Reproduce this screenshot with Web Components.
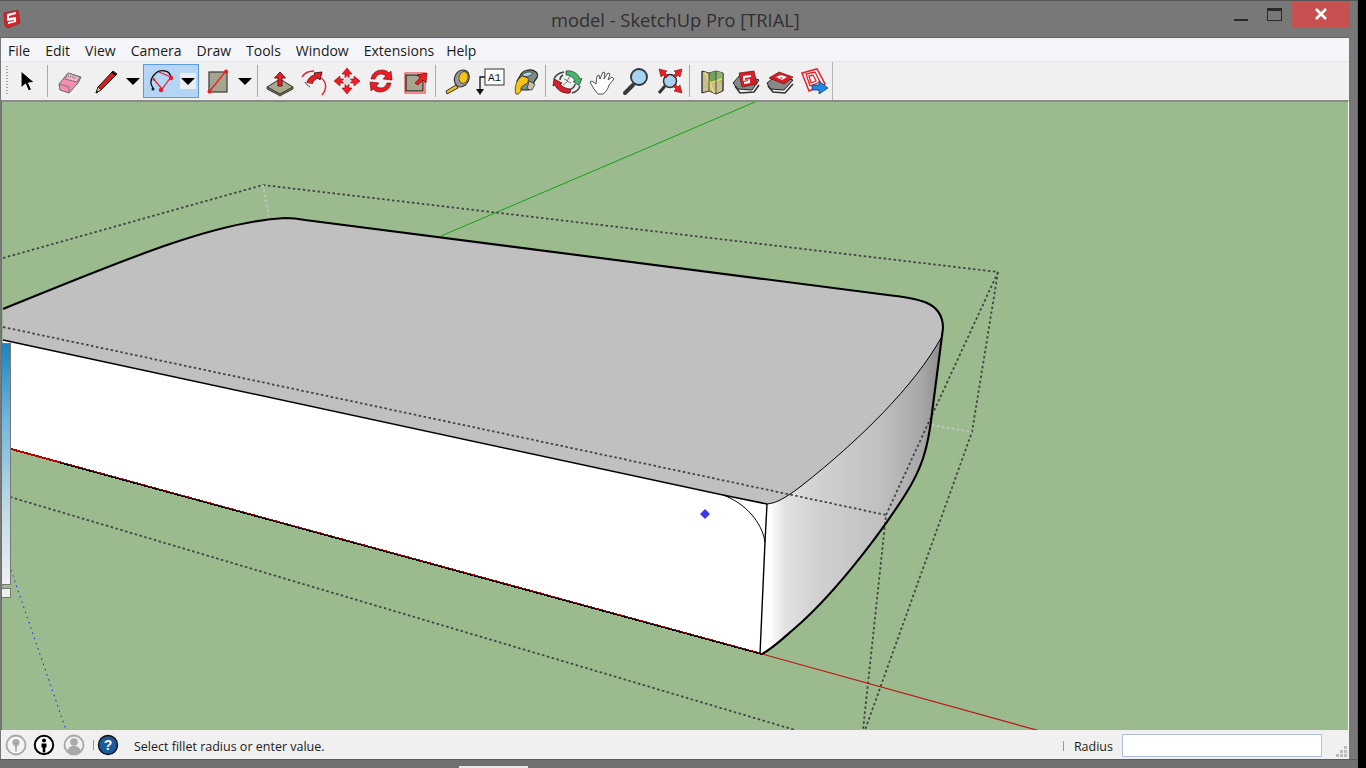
<!DOCTYPE html>
<html>
<head>
<meta charset="utf-8">
<title>model - SketchUp Pro [TRIAL]</title>
<style>
    html, body { margin: 0; height: 100%; background: #000; overflow: hidden; }
</style>
</head>
<body>
<su-window>
    <su-titlebar slot="title">model - SketchUp Pro [TRIAL]</su-titlebar>
    <su-menubar>
        <su-menu>File</su-menu><su-menu>Edit</su-menu><su-menu>View</su-menu><su-menu>Camera</su-menu>
        <su-menu>Draw</su-menu><su-menu>Tools</su-menu><su-menu>Window</su-menu><su-menu>Extensions</su-menu><su-menu style="margin-left:-3px">Help</su-menu>
    </su-menubar>
    <su-toolbar>
        <su-tool icon="select"></su-tool>
        <su-sep></su-sep>
        <su-tool icon="eraser"></su-tool>
        <su-tool icon="pencil" drop></su-tool>
        <su-tool icon="arc" drop active></su-tool>
        <su-tool icon="rect" drop></su-tool>
        <su-sep></su-sep>
        <su-tool icon="pushpull"></su-tool>
        <su-tool icon="followme"></su-tool>
        <su-tool icon="move"></su-tool>
        <su-tool icon="rotate"></su-tool>
        <su-tool icon="scale"></su-tool>
        <su-sep style="margin-left:2px"></su-sep>
        <su-tool icon="tape"></su-tool>
        <su-tool icon="text"></su-tool>
        <su-tool icon="paint"></su-tool>
        <su-sep style="margin:0 4px 0 2px"></su-sep>
        <su-tool icon="orbit"></su-tool>
        <su-tool icon="pan"></su-tool>
        <su-tool icon="zoom"></su-tool>
        <su-tool icon="extents"></su-tool>
        <su-sep style="margin-left:2px"></su-sep>
        <su-tool icon="map"></su-tool>
        <su-tool icon="warehouse"></su-tool>
        <su-tool icon="component"></su-tool>
        <su-tool icon="send"></su-tool>
    </su-toolbar>
    <su-viewport></su-viewport>
    <su-statusbar label="Radius">Select fillet radius or enter value.</su-statusbar>
</su-window>

<script>
const UI_FONT = '"Open Sans", "Noto Sans", "Liberation Sans", sans-serif';

// every icon is drawn on a 34x34 box, centred on the tool
const ICONS = {
    select: `<path d="M11 7l0 17 4.500-4 3 7 3-1.500-3-6.500 6-.5z" fill="#000" stroke="#fff" stroke-width="1"/>`,
    eraser: `<path d="M6 20L15 9 28 13 25 19 16 29 7 26z" fill="#f48fb1" stroke="#666" stroke-width="1"/>
             <path d="M15 9l12 4-3 5-12-3z" fill="#f7b4c8" stroke="#777" stroke-width="1"/>
             <path d="M6 20l10 3v6" fill="none" stroke="#777" stroke-width="1"/>
             <path d="M15 12l8 2" stroke="#888" stroke-width="2" stroke-dasharray="1 1"/>`,
    pencil: `<path d="M7 29l2-6L24 7l4 3L12 26z" fill="#e01818" stroke="#222" stroke-width="1"/>
             <path d="M7 29l2-6 3 3z" fill="#d8c89a" stroke="#222" stroke-width=".7"/>
             <path d="M7 29l1-2.500 1.500 1.200z" fill="#000"/>
             <path d="M23 8l4 3" stroke="#111" stroke-width="2"/>`,
    arc: `<path d="M8 24C2 16 11 5 20 7c3 .5 5 2 6 6" fill="none" stroke="#111" stroke-width="1.300"/>
          <path d="M9 15.500L17 25 26 13 14 8" fill="none" stroke="#ee1c25" stroke-width="1.200"/>
          <circle cx="26" cy="14" r="2.200" fill="#ee1c25"/><circle cx="16" cy="26" r="2.200" fill="#ee1c25"/>
          <circle cx="9" cy="15.500" r="1.300" fill="#ee1c25"/><circle cx="8" cy="25" r="1.500" fill="#222"/>`,
    rect: `<rect x="8" y="8" width="18" height="20" fill="#a5a58d" stroke="#444" stroke-width="1.300"/>
           <path d="M8 28L25 7" stroke="#ee1c25" stroke-width="1.300"/>
           <circle cx="25" cy="7.500" r="2" fill="#ee1c25"/><circle cx="8.500" cy="27.500" r="2" fill="#ee1c25"/>`,
    pushpull: `<path d="M4 23l13-8 13 8-13 7z" fill="#a8a88c" stroke="#333" stroke-width="1"/>
               <path d="M4 23v2l13 7 13-7v-2l-13 7z" fill="#70705c" stroke="#333" stroke-width=".8"/>
               <path d="M15 22v-8h-3.500L17 8l5.500 6H19v8z" fill="#ee1c25" stroke="#400" stroke-width=".8"/>`,
    followme: `<path d="M5 13C8 8 13 7 17 7" fill="none" stroke="#ee1c25" stroke-width="1.400"/>
               <path d="M24 14c6 4 6 11 1 17" fill="none" stroke="#ee1c25" stroke-width="1.400"/>
               <path d="M10 19c1-4 3-7 8-8l-1-2 8-1-2 8-2-2c-3 1-5 3-6 6" fill="#ee1c25" stroke="#300" stroke-width=".8"/>
               <path d="M8 18c1 2 3 4 5 5" fill="none" stroke="#444" stroke-width="1"/>`,
    move: `<path d="M17 4l5 6h-3v4h-4v-4h-3zM17 30l-5-6h3v-4h4v4h3zM4 17l6-5v3h4v4h-4v3zM30 17l-6 5v-3h-4v-4h4v-3z" fill="#ee1c25" stroke="#900" stroke-width=".6"/>
           <rect x="13.500" y="13.500" width="7" height="7" fill="#d4dde0" transform="rotate(45 17 17)"/>`,
    rotate: `<path d="M7 15C8 9 13 6 18 6c3 0 5 1 7 3l2-2 1 9-9-1 3-3c-1.500-1-3-2-5-2-3 0-5 2-6 5z" fill="#ee1c25" stroke="#600" stroke-width=".6"/>
             <path d="M27 19c-1 6-6 9-11 9-3 0-5-1-7-3l-2 2-1-9 9 1-3 3c1.500 1 3 2 5 2 3 0 5-2 6-5z" fill="#ee1c25" stroke="#600" stroke-width=".6"/>`,
    scale: `<rect x="7" y="9" width="20" height="20" fill="#fff" stroke="#ee1c25" stroke-width="1"/>
            <rect x="8" y="11" width="17" height="16" fill="#a5a58d" stroke="#222" stroke-width="1.200"/>
            <path d="M17 19l5-5-3-3 10-2-1 10-3-3-5 5z" fill="#ee1c25" stroke="#500" stroke-width=".6"/>`,
    tape: `<path d="M14 19c-2-6 2-13 8-13 5 0 7 5 6 9-1 5-5 8-9 8-2 0-4-2-5-4z" fill="#9a9a96" stroke="#333" stroke-width="1.200"/>
           <ellipse cx="22.500" cy="13.500" rx="4.500" ry="6" fill="#f4c514" stroke="#555" stroke-width="1" transform="rotate(15 22.500 13.500)"/>
           <path d="M15 21L5 27l1 3 11-6z" fill="#e8c21a" stroke="#333" stroke-width="1"/>`,
    text: `<rect x="12" y="5" width="19" height="16" fill="#fff" stroke="#333" stroke-width="1"/>
           <text x="21.500" y="17" font-family="Liberation Mono, monospace" font-size="11" text-anchor="middle" fill="#111">A1</text>
           <path d="M12 13H7v13" fill="none" stroke="#111" stroke-width="1.300"/><path d="M3 25h8l-4 6z" fill="#111"/>`,
    paint: `<path d="M12 12c2-6 11-8 16-4 2 2 2 5 0 7l-7 11H14L9 17z" fill="#7c8a88" stroke="#222" stroke-width="1.200"/>
            <path d="M14 11c3-3 8-4 11-2-2 3-7 5-11 2z" fill="#a9d5de" stroke="#333" stroke-width=".8"/>
            <path d="M14 12C8 16 6 24 8 30c3 1 5-2 5-5 0-3 3-4 5-5 2-1 3-4 2-6z" fill="#f4c514" stroke="#333" stroke-width=".8"/>
            <path d="M21 17l6 3-3 6-5-1z" fill="#c9c2aa" stroke="#333" stroke-width=".8"/>`,
    orbit: `<path d="M16 7c6-1 12 2 14 8l2-.5-3 7-6-4 2-.5c-1-3-5-6-9-6z" fill="#46b36a" stroke="#1c3a24" stroke-width=".7"/>
            <path d="M4 15l8 4-2 1c2 3 7 5 11 5l-1 4c-7 1-13-3-15-8l-2 1z" fill="#d8202a" stroke="#400" stroke-width=".7"/>
            <path d="M14 8c-5 1-9 4-10 7M13 11c-2 1-3 3-3 5" fill="none" stroke="#444" stroke-width="1.500"/>
            <path d="M30 22c-1 3-4 6-8 7M25 20c0 2-2 4-4 5" fill="none" stroke="#444" stroke-width="1.500"/>
            <path d="M13 21l5-4-4-2M20 12l-3 5 4 2" fill="none" stroke="#777" stroke-width="1"/>`,
    pan: `<path d="M8 25L4 18l2-1 4 3 1-8 2-1 1 4 3-7 2 1-1 6 4-6 2 1-2 6 4-3 2 2-5 6c-1 4-3 7-6 9H12z" fill="#fff" stroke="#444" stroke-width=".9" stroke-linejoin="round"/>`,
    zoom: `<path d="M6 29l8-8" stroke="#3a3a3a" stroke-width="4" stroke-linecap="round"/>
           <circle cx="20" cy="13" r="8" fill="#a6d3ef" stroke="#333" stroke-width="1.800"/>`,
    extents: `<circle cx="17" cy="17" r="6.500" fill="#a6d3ef" stroke="#333" stroke-width="1.500"/>
              <path d="M12 22l-6 7" stroke="#333" stroke-width="3"/>
              <path d="M6 5l8 2-2 2 3 3-2 2-3-3-2 2zM29 5l-2 8-2-2-3 3-2-2 3-3-2-2zM29 29l-8-2 2-2-3-3 2-2 3 3 2-2z" fill="#ee1c25" stroke="#500" stroke-width=".5"/>`,
    map: `<path d="M7 7l7 2 7-2 7 2v18l-7 3-7-3-7 2z" fill="#c9bf8c" stroke="#333" stroke-width="1"/>
          <path d="M14 9l7-2v10l-7 4z" fill="#6fa35c"/><path d="M21 7l7 2v9l-7-1z" fill="#8fb26a"/>
          <path d="M10 8l5 11 4 10M15 19l12-4" fill="none" stroke="#e8e06a" stroke-width="1.600"/>
          <path d="M7 7v22M14 9v18M21 7v23M28 9v18" stroke="#333" stroke-width=".8"/>`,
    warehouse: `<path d="M4 19l8-9 18 6-7 10-14-1z" fill="#888" stroke="#222" stroke-width="1"/>
                <path d="M6 22l5 7 14-1 5-7" fill="none" stroke="#333" stroke-width="1.600"/>
                <path d="M10 9l15-2 3 13-15 3z" fill="#d91f26" stroke="#611" stroke-width=".7"/>
                <path d="M14 12l8-1v2l-6 1v2l5-1v4l-6 1v-2l4-1v-1l-5 1z" fill="#fff"/>`,
    component: `<path d="M4 19l10-8 16 5-9 10-14-1z" fill="#888" stroke="#222" stroke-width="1"/>
                <path d="M5 22l5 6 12 1 8-9" fill="none" stroke="#333" stroke-width="1.600"/>
                <path d="M6 14l10-6 14 5-9 7z" fill="#d91f26" stroke="#611" stroke-width=".7"/>
                <path d="M13 13l5-2 6 2-5 3z" fill="#fff"/><path d="M17 13l3 1-2 1z" fill="#d91f26"/>`,
    send: `<path d="M5 9l15-4 8 15-16 7z" fill="#fff" stroke="#ee1c25" stroke-width="1.500"/>
           <path d="M9 10l9-2 5 10-10 4zM12 12l4-1 3 6-5 2z" fill="none" stroke="#ee1c25" stroke-width="1.300"/>
           <path d="M15 21h7v-4l9 7-9 6v-4h-7z" fill="#1e88e5" stroke="#0b3a70" stroke-width=".8"/>`
};

class SuWindow extends HTMLElement {
    constructor() {
        super();
        this.attachShadow({ mode: 'open' });
    }

    connectedCallback() {
        this.shadowRoot.innerHTML = `
            <style>
                :host {
                    display: flex;
                    flex-direction: column;
                    width: 1358px;
                    height: 768px;
                    box-sizing: border-box;
                    background: #787878;
                    border-top: 1px solid #565656;
                    border-right: 1px solid #6a6a6a;
                    font-family: ${UI_FONT};
                    position: relative;
                }
                .client {
                    display: flex;
                    flex-direction: column;
                    height: 722px;
                    width: 1348px;
                    margin-left: 1px;
                    background: #f0f0f0;
                    border-top: 1px solid #636363;
                    box-sizing: border-box;
                }
                .foot {
                    flex: 1;
                    border-top: 1px solid #5c5c5c;
                    background: #707070;
                }
                .tab {
                    position: absolute;
                    left: 459px;
                    bottom: 0;
                    width: 69px;
                    height: 2px;
                    background: #e8e8e8;
                }
            </style>
            <slot name="title"></slot>
            <div class="client"><slot></slot></div>
            <div class="foot"></div>
            <div class="tab"></div>
        `;
    }
}

class SuTitlebar extends HTMLElement {
    constructor() {
        super();
        this.attachShadow({ mode: 'open' });
    }

    connectedCallback() {
        this.shadowRoot.innerHTML = `
            <style>
                :host {
                    display: flex;
                    align-items: flex-start;
                    height: 36px;
                    color: #303030;
                    position: relative;
                }
                .logo { margin: 8px 0 0 3px; width: 18px; height: 20px; }
                .caption {
                    position: absolute;
                    left: 551px;
                    top: 6px;
                    font-size: 18.300px;
                    line-height: 26px;
                    white-space: nowrap;
                }
                .buttons { margin-left: auto; display: flex; margin-right: 7px; }
                .min, .max { width: 46px; height: 26px; display: flex; align-items: center; justify-content: center; }
                .min { margin-right: -6px; }
                .min i { display: block; width: 14px; height: 2px; background: #2a2a2a; margin-top: 12px; }
                .max { width: 32px; }
                .max i {
                    display: block; width: 13px; height: 9px;
                    border: 1px solid #2a2a2a; border-top-width: 3px;
                }
                .close {
                    width: 58px; height: 26px; margin-left: 2px; background: #c75050;
                    display: flex; align-items: center; justify-content: center;
                }
            </style>
            <svg class="logo" viewBox="0 0 18 20">
                <path d="M1 4l14-3 2 13-12 5-3-2z" fill="#d9232a" stroke="#8e1a1e" stroke-width=".6"/>
                <path d="M4 5l9-2v2L6 7v2l7-1v5l-8 2v-2l6-1v-1l-7 1z" fill="#fff"/>
            </svg>
            <span class="caption"><slot></slot></span>
            <div class="buttons">
                <div class="min"><i></i></div>
                <div class="max"><i></i></div>
                <div class="close">
                    <svg width="12" height="12" viewBox="0 0 12 12"><path d="M1 1l10 10M11 1L1 11" stroke="#fff" stroke-width="2.600"/></svg>
                </div>
            </div>
        `;
    }
}

class SuMenubar extends HTMLElement {
    constructor() {
        super();
        this.attachShadow({ mode: 'open' });
    }

    connectedCallback() {
        this.shadowRoot.innerHTML = `
            <style>
                :host {
                    display: flex;
                    align-items: center;
                    flex: none;
                    box-sizing: border-box;
                    height: 24px;
                    padding: 2px 0 0 7px;
                    gap: 15px;
                    background: #f5f6f9;
                    border-bottom: 1px solid #e6e7ea;
                    font-size: 14px;
                    color: #1a1a1a;
                }
            </style>
            <slot></slot>
        `;
    }
}

class SuMenu extends HTMLElement {
    constructor() {
        super();
        this.attachShadow({ mode: 'open' });
    }

    connectedCallback() {
        this.shadowRoot.innerHTML = `<style>:host { display: block; white-space: nowrap; }</style><slot></slot>`;
    }
}

class SuToolbar extends HTMLElement {
    constructor() {
        super();
        this.attachShadow({ mode: 'open' });
    }

    connectedCallback() {
        this.shadowRoot.innerHTML = `
            <style>
                :host {
                    display: flex;
                    align-items: center;
                    flex: none;
                    height: 38px;
                    width: 832px;
                    box-sizing: border-box;
                    padding-left: 5px;
                    border-right: 1px solid #b4b4b4;
                    background: #f0f0f0;
                }
                .grip {
                    width: 2px; height: 30px; margin-right: 2px;
                    background: repeating-linear-gradient(#a0a0a0 0 1px, transparent 1px 3px);
                }
            </style>
            <div class="grip"></div>
            <slot></slot>
        `;
    }
}

class SuSep extends HTMLElement {
    constructor() {
        super();
        this.attachShadow({ mode: 'open' });
    }

    connectedCallback() {
        this.shadowRoot.innerHTML = `
            <style>:host { display: block; width: 1px; height: 32px; margin: 0 5px 0 3px; background: #a8a8a8; }</style>
        `;
    }
}

class SuTool extends HTMLElement {
    constructor() {
        super();
        this.attachShadow({ mode: 'open' });
    }

    connectedCallback() {
        const icon = ICONS[this.getAttribute('icon')] || '';
        const drop = this.hasAttribute('drop');
        this.shadowRoot.innerHTML = `
            <style>
                :host {
                    display: flex;
                    align-items: center;
                    height: 34px;
                    box-sizing: border-box;
                }
                :host([icon="pencil"]) { margin-left: 2px; }
                :host([icon="move"]) { margin-left: -1px; }
                :host([icon="scale"]) { margin-right: 1px; }
                :host([icon="text"]) { margin-left: -2px; }
                :host([icon="paint"]) { margin: 0 1px; }
                :host([icon="pan"]) { margin-left: 2px; }
                :host([icon="zoom"]) { margin-left: -1px; }
                :host([active]) {
                    background: #b5d5f5;
                    outline: 1px solid #5b9be0;
                    outline-offset: -1px;
                    margin: 0 2px 0 1px;
                    padding-right: 3px;
                }
                svg.icon { display: block; width: 34px; height: 34px; flex: none; }
                :host([active]) svg.icon { margin-left: 2px; }
                .drop {
                    width: 19px; height: 16px; flex: none;
                    display: flex; align-items: center; justify-content: center;
                }
                :host([active]) .drop { background: #e8eef5; margin-left: 1px; width: 16px; }
                .drop i {
                    display: block; width: 0; height: 0;
                    border: 7px solid transparent; border-top-color: #000; border-bottom: 0;
                }
            </style>
            <svg class="icon" viewBox="0 0 34 34">${icon}</svg>
            ${drop ? '<div class="drop"><i></i></div>' : ''}
        `;
    }
}

class SuViewport extends HTMLElement {
    constructor() {
        super();
        this.attachShadow({ mode: 'open' });
    }

    connectedCallback() {
        // model outlines, in screen coordinates
        const top = 'M3 309C110 266 210 222 285 218C295 218 300 219 305 220L880 294C915 298 943 300 943 328';
        const side = 'L932 413C928 450 921 470 905 495C875 542 830 598 795 628C780 641 772 649 762 654';
        const crease = 'C915 385 860 440 800 487C785 498 777 503 767 504';
        this.shadowRoot.innerHTML = `
            <style>
                :host {
                    display: block;
                    flex: 1;
                    min-height: 0;
                    position: relative;
                    background: #9bbb8f;
                    border-top: 2px solid #8a8a8a;
                    border-left: 1px solid #6e6e6e;
                    border-right: 1px solid #fff;
                    overflow: hidden;
                }
                svg { position: absolute; left: 0; top: 0; width: 1346px; height: 628px; }
                .panel {
                    position: absolute;
                    left: -2px; top: 241px;
                    width: 10px; height: 240px;
                    border: solid #777; border-width: 1px 1px 1px 0;
                    background: linear-gradient(#1c83bd, #6fb3dc 30%, #b9d8e2 65%, #eef1f0);
                }
                .panel-foot {
                    position: absolute;
                    left: -2px; top: 486px;
                    width: 10px; height: 8px;
                    background: #eef0ea;
                    border: solid #777; border-width: 1px 1px 1px 0;
                }
            </style>
            <svg viewBox="2 102 1346 628">
                <defs>
                    <linearGradient id="shade" gradientUnits="userSpaceOnUse" x1="765" y1="0" x2="942" y2="0">
                        <stop offset="0" stop-color="#fff"/>
                        <stop offset=".03" stop-color="#fff"/>
                        <stop offset=".11" stop-color="#e2e2e2"/>
                        <stop offset=".28" stop-color="#d2d2d2"/>
                        <stop offset=".65" stop-color="#c0c0c0"/>
                        <stop offset=".88" stop-color="#a8a8a8"/>
                        <stop offset="1" stop-color="#8c8c8c"/>
                    </linearGradient>
                </defs>

                <path d="M755 102L441 236" stroke="#16a016" stroke-width="1" fill="none"/>

                <path d="${top} L941 338 ${crease} L723 495 3 340 Z" fill="#c0c0c0"/>
                <path d="M3 340L767 504 760 654 3 447Z" fill="#fff"/>
                <path d="M941 338 ${crease} L760 654 762 654 C772 649 780 641 795 628C830 598 875 542 905 495C921 470 928 450 932 413L943 328Z" fill="url(#shade)"/>

                <g fill="none" stroke="#444" stroke-width="1.800" stroke-dasharray="2.500 2.500">
                    <path d="M3 258L263 185 998 272"/>
                    <path d="M3 327L886 515"/>
                    <path d="M998 272L972 432 865 730"/>
                    <path d="M998 272L886 515 863 730"/>
                    <path d="M10 497L795 730"/>
                </g>
                <g fill="none" stroke="#c4c4c4" stroke-width="1.800" stroke-dasharray="2.500 2.500">
                    <path d="M263 185L269 217"/>
                    <path d="M932 425L972 432"/>
                </g>
                <path d="M11 570L66 730" fill="none" stroke="#1c1ce0" stroke-width="1" stroke-dasharray="1.500 4"/>

                <path d="M762 654L1040 731" stroke="#c01010" stroke-width="1.200" fill="none"/>
                <path d="M11 449L762 654" stroke="#c00000" stroke-width="2" fill="none" shape-rendering="crispEdges"/>
                <path d="M60 462.800L762 654.400" stroke="#000" stroke-width="1.300" fill="none" shape-rendering="crispEdges"/>

                <g fill="none" stroke="#000" stroke-linejoin="round">
                    <path d="${top}" stroke-width="2.100"/>
                    <path d="M943 328${side}" stroke-width="2.100"/>
                    <path d="M3 340L723 495 767 504" stroke-width="1.500"/>
                    <path d="M767 504L765 542 760 654" stroke-width="1.400"/>
                    <path d="M941 338${crease}" stroke-width="1"/>
                    <path d="M723 495C745 503 762 522 765 542" stroke-width="1"/>
                </g>

                <path d="M705 509L710 514 705 519 700 514Z" fill="#3a3ae8"/>
            </svg>
            <div class="panel"></div>
            <div class="panel-foot"></div>
        `;
    }
}

class SuStatusbar extends HTMLElement {
    constructor() {
        super();
        this.attachShadow({ mode: 'open' });
    }

    connectedCallback() {
        const label = this.getAttribute('label') || '';
        this.shadowRoot.innerHTML = `
            <style>
                :host {
                    display: flex;
                    align-items: center;
                    flex: none;
                    height: 29px;
                    padding-left: 4px;
                    background: #f0f0f0;
                    font-size: 12.500px;
                    color: #1a1a22;
                    position: relative;
                }
                .icons { display: flex; align-items: center; gap: 8px; margin-top: 1px; }
                .icons svg { display: block; width: 22px; height: 22px; }
                .bar { width: 1px; height: 10px; background: #999; }
                .message { margin: 4px 0 0 15px; }
                .right { margin-left: auto; display: flex; align-items: center; margin-right: 27px; }
                .right .bar { margin-right: 10px; margin-top: 2px; }
                .right span { margin-top: 4px; }
                .value {
                    width: 198px; height: 21px; margin: 2px 0 0 9px;
                    background: #fff; border: 1px solid #b0bfdc;
                }
                .grip {
                    position: absolute; right: 2px; bottom: 2px;
                    width: 11px; height: 11px;
                    background:
                        linear-gradient(#bdbdbd, #bdbdbd) 8px 0/3px 3px no-repeat,
                        linear-gradient(#bdbdbd, #bdbdbd) 4px 4px/3px 3px no-repeat,
                        linear-gradient(#bdbdbd, #bdbdbd) 8px 4px/3px 3px no-repeat,
                        linear-gradient(#bdbdbd, #bdbdbd) 0 8px/3px 3px no-repeat,
                        linear-gradient(#bdbdbd, #bdbdbd) 4px 8px/3px 3px no-repeat,
                        linear-gradient(#bdbdbd, #bdbdbd) 8px 8px/3px 3px no-repeat;
                }
            </style>
            <div class="icons">
                <svg viewBox="0 0 22 22">
                    <circle cx="11" cy="11" r="9.500" fill="#f4f4f4" stroke="#a8a8a8" stroke-width="1.800"/>
                    <circle cx="11" cy="8.500" r="3.500" fill="#a8a8a8"/><path d="M9.800 10h2.400l-.6 8h-1.200z" fill="#a8a8a8"/>
                </svg>
                <svg viewBox="0 0 22 22" style="margin-left:-2px">
                    <circle cx="11" cy="11" r="9.200" fill="#fff" stroke="#000" stroke-width="2"/>
                    <circle cx="11" cy="6.500" r="2" fill="#000"/><path d="M8.500 9.500h5v4h-1.200v5h-2.600v-5H8.500z" fill="#000"/>
                </svg>
                <svg viewBox="0 0 22 22">
                    <circle cx="11" cy="11" r="9.500" fill="#f0f0f0" stroke="#a8a8a8" stroke-width="1.800"/>
                    <circle cx="11" cy="8" r="3.800" fill="#a8a8a8"/><path d="M4 18c1-5 4-6 7-6s6 1 7 6l-3 2.500H7z" fill="#a8a8a8"/>
                </svg>
                <div class="bar"></div>
                <svg viewBox="0 0 22 22" style="margin-left:-5px">
                    <circle cx="11" cy="11" r="9.500" fill="#1b5a9c" stroke="#111" stroke-width="1.400"/>
                    <text x="11" y="16" font-family="Liberation Sans, sans-serif" font-size="14" font-weight="bold" text-anchor="middle" fill="#fff">?</text>
                </svg>
            </div>
            <span class="message"><slot></slot></span>
            <div class="right">
                <div class="bar"></div>
                <span>${label}</span>
                <div class="value"></div>
            </div>
            <div class="grip"></div>
        `;
    }
}

customElements.define('su-window', SuWindow);
customElements.define('su-titlebar', SuTitlebar);
customElements.define('su-menubar', SuMenubar);
customElements.define('su-menu', SuMenu);
customElements.define('su-toolbar', SuToolbar);
customElements.define('su-sep', SuSep);
customElements.define('su-tool', SuTool);
customElements.define('su-viewport', SuViewport);
customElements.define('su-statusbar', SuStatusbar);
</script>
</body>
</html>
